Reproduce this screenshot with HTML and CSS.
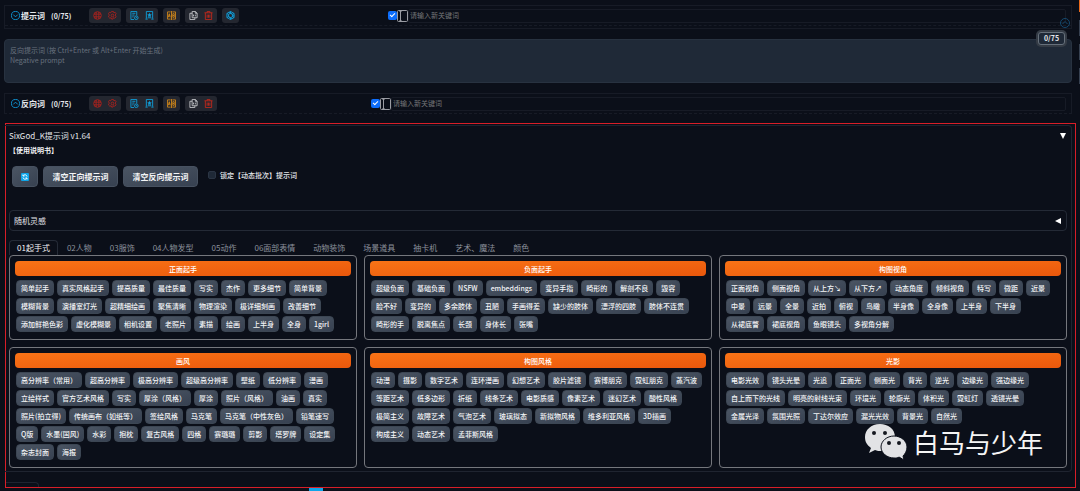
FILE: index.html
```html
<!DOCTYPE html>
<html lang="zh-CN">
<head>
    <meta charset="UTF-8">
    <meta name="viewport" content="width=device-width, initial-scale=1.0">
    <title>SixGod_K提示词</title>
    <link rel="stylesheet" href="styles.css">
</head>
<body>
    <!-- Icons -->
    <svg class="sprite" aria-hidden="true">
        <symbol id="i-down" viewBox="0 0 20 20"><circle cx="10" cy="10" r="9"/><path d="M5 8l5 5 5-5"/></symbol>
        <symbol id="i-up" viewBox="0 0 20 20"><circle cx="10" cy="10" r="9"/><path d="M5 12l5-5 5 5"/></symbol>
        <symbol id="i-globe" viewBox="0 0 20 20"><circle cx="10" cy="10" r="8.5"/><path d="M2 7h16M2 13h16M7 2v16M13 2v16"/></symbol>
        <symbol id="i-gear" viewBox="0 0 20 20"><path d="M8 1h4l1 3 3-1 2 3-2 3 2 4-3 3-3-1-1 3H8l-1-3-3 1-3-3 2-4-2-3 2-3 3 1z"/><circle cx="10" cy="10" r="3"/></symbol>
        <symbol id="i-history" viewBox="0 0 20 20"><path d="M9 19H2V1h13v9M5 5h7M5 9h5M5 13h3"/><circle cx="14" cy="15" r="4"/><path d="M14 13v2h2"/></symbol>
        <symbol id="i-fav" viewBox="0 0 20 20"><path d="M3 17V1h14v16M1 18h5M14 18h5M6 15h8"/><path class="solid" d="M10 4l1.500 3 3.500.5-2.500 2.500.5 3.500-3-1.500-3 1.500.5-3.500L5 7.500 8.500 7z"/></symbol>
        <symbol id="i-trans" viewBox="0 0 20 20"><path d="M8 2H1v16h7M12 2h7v16h-7M10 0v20M3 14l2-8 2 8M4 11h3M13 6v8h3l1-2-1-2h-3M13 6h3l1 2-1 2"/></symbol>
        <symbol id="i-copy" viewBox="0 0 20 20"><path d="M7 1h7l4 4v10H7zM14 1v4h4M7 5H2v14h11v-4M10 8v4M14 8v4"/></symbol>
        <symbol id="i-trash" viewBox="0 0 20 20"><path d="M1 4h18M7 4V1h6v3M3 4v15h14V4M7 8v7M10 8v7M13 8v7"/></symbol>
        <symbol id="i-ai" viewBox="0 0 20 20"><path d="M10 1l8 4.500v9L10 19l-8-4.500v-9z"/><path d="M10 5l4.500 2.500v5L10 15l-4.500-2.500v-5zM10 1v4M18 5.500l-3.500 2M18 14.500l-3.500-2M10 19v-4M2 14.500l3.500-2M2 5.500l3.500 2M6 3l8 4M14 17l-8-4M18 10l-4 2"/></symbol>
        <symbol id="i-panel" viewBox="0 0 22 24"><rect x="1" y="1" width="20" height="22" rx="2"/><path d="M5 3h4M7 3v18M5 21h4"/></symbol>
    </svg>

    <div class="side-strip"><i class="hot"></i><i></i><i></i><i></i></div>

    <div class="prompt-bar">
        <button class="title" type="button"><svg><use href="#i-down"/></svg>提示词</button>
        <span class="count">(0/75)</span>
        <div class="tools">
            <div class="group red"><button type="button" aria-label="语言"><svg><use href="#i-globe"/></svg></button><button type="button" aria-label="设置"><svg><use href="#i-gear"/></svg></button></div>
            <div class="group blue"><button type="button" aria-label="历史"><svg><use href="#i-history"/></svg></button><button type="button" aria-label="收藏"><svg><use href="#i-fav"/></svg></button></div>
            <div class="group amber"><button type="button" aria-label="翻译"><svg><use href="#i-trans"/></svg></button></div>
            <div class="group"><button type="button" aria-label="复制"><svg><use href="#i-copy"/></svg></button><button class="red" type="button" aria-label="删除"><svg><use href="#i-trash"/></svg></button></div>
            <div class="group blue"><button type="button" aria-label="AI"><svg><use href="#i-ai"/></svg></button></div>
        </div>
        <input class="tick" type="checkbox" checked aria-label="启用">
        <svg class="panel-icon"><use href="#i-panel"/></svg>
        <input class="keyword" type="text" placeholder="请输入新关键词" aria-label="请输入新关键词">
        <button class="fold" type="button" aria-label="收起"><svg><use href="#i-up"/></svg></button>
    </div>

    <div class="negative">
        <textarea aria-label="反向提示词" placeholder="反向提示词 (按 Ctrl+Enter 或 Alt+Enter 开始生成)&#10;Negative prompt"></textarea>
        <span class="badge">0/75</span>
    </div>

    <div class="prompt-bar short">
        <button class="title" type="button"><svg><use href="#i-up"/></svg>反向词</button>
        <span class="count">(0/75)</span>
        <div class="tools">
            <div class="group red"><button type="button" aria-label="语言"><svg><use href="#i-globe"/></svg></button><button type="button" aria-label="设置"><svg><use href="#i-gear"/></svg></button></div>
            <div class="group blue"><button type="button" aria-label="历史"><svg><use href="#i-history"/></svg></button><button type="button" aria-label="收藏"><svg><use href="#i-fav"/></svg></button></div>
            <div class="group amber"><button type="button" aria-label="翻译"><svg><use href="#i-trans"/></svg></button></div>
            <div class="group"><button type="button" aria-label="复制"><svg><use href="#i-copy"/></svg></button><button class="red" type="button" aria-label="删除"><svg><use href="#i-trash"/></svg></button></div>
        </div>
        <input class="tick" type="checkbox" checked aria-label="启用">
        <svg class="panel-icon"><use href="#i-panel"/></svg>
        <input class="keyword" type="text" placeholder="请输入新关键词" aria-label="请输入新关键词">
    </div>

    <div class="frame">
        <section class="block">
            <div class="block-head">
                <span>SixGod_K提示词 v1.64</span>
                <svg class="arrow" viewBox="0 0 6 6"><path d="M0 0h6L3 6z"/></svg>
            </div>
            <a class="manual" href="#">【使用说明书】</a>

            <div class="actions">
                <button class="refresh" type="button" aria-label="刷新">
                    <svg viewBox="0 0 16 16"><rect width="16" height="16" rx="2"/><path d="M12 7a4 4 0 0 0-7-2M4 3v3h3M4 9a4 4 0 0 0 7 2M12 13v-3H9"/></svg>
                </button>
                <button type="button">清空正向提示词</button>
                <button type="button">清空反向提示词</button>
                <label><input type="checkbox">锁定【动态批次】提示词</label>
            </div>

            <button class="accordion" type="button">
                <span>随机灵感</span>
                <svg class="arrow" viewBox="0 0 6 6"><path d="M6 0v6L0 3z"/></svg>
            </button>

            <nav class="tabs">
                <button class="active" type="button">01起手式</button>
                <button type="button">02人物</button>
                <button type="button">03服饰</button>
                <button type="button">04人物发型</button>
                <button type="button">05动作</button>
                <button type="button">06面部表情</button>
                <button type="button">动物装饰</button>
                <button type="button">场景道具</button>
                <button type="button">抽卡机</button>
                <button type="button">艺术、魔法</button>
                <button type="button">颜色</button>
            </nav>

            <div class="cards">
                <div class="card">
                    <button class="card-title" type="button">正面起手</button>
                    <div class="tags">
                        <button>简单起手</button><button>真实风格起手</button><button>提高质量</button><button>最佳质量</button><button>写实</button><button>杰作</button><button>更多细节</button><button>简单背景</button>
                        <button>模糊背景</button><button>演播室灯光</button><button>超精细绘画</button><button>聚焦清晰</button><button>物理渲染</button><button>极详细刻画</button><button>改善细节</button>
                        <button>添加鲜艳色彩</button><button>虚化模糊景</button><button>相机设置</button><button>老照片</button><button>素描</button><button>绘画</button><button>上半身</button><button>全身</button><button>1girl</button>
                    </div>
                </div>
                <div class="card">
                    <button class="card-title" type="button">负面起手</button>
                    <div class="tags">
                        <button>超级负面</button><button>基础负面</button><button>NSFW</button><button>embeddings</button><button>变异手指</button><button>畸形的</button><button>解剖不良</button><button>毁容</button>
                        <button>脸不好</button><button>变异的</button><button>多余肢体</button><button>丑陋</button><button>手画得差</button><button>缺少的肢体</button><button>漂浮的四肢</button><button>肢体不连贯</button>
                        <button>畸形的手</button><button>脱离焦点</button><button>长颈</button><button>身体长</button><button>张嘴</button>
                    </div>
                </div>
                <div class="card">
                    <button class="card-title" type="button">构图视角</button>
                    <div class="tags">
                        <button>正面视角</button><button>侧面视角</button><button>从上方↘</button><button>从下方↗</button><button>动态角度</button><button>倾斜视角</button><button>特写</button><button>微距</button><button>近景</button>
                        <button>中景</button><button>远景</button><button>全景</button><button>近拍</button><button>俯视</button><button>鸟瞰</button><button>半身像</button><button>全身像</button><button>上半身</button><button>下半身</button>
                        <button>从裙底瞥</button><button>裙底视角</button><button>鱼眼镜头</button><button>多视角分解</button>
                    </div>
                </div>
                <div class="card">
                    <button class="card-title" type="button">画风</button>
                    <div class="tags">
                        <button>高分辨率（常用）</button><button>超高分辨率</button><button>极高分辨率</button><button>超级高分辨率</button><button>壁纸</button><button>低分辨率</button><button>漫画</button>
                        <button>立绘样式</button><button>官方艺术风格</button><button>写实</button><button>厚涂（风格）</button><button>厚涂</button><button>照片（风格）</button><button>油画</button><button>真实</button>
                        <button>照片(拍立得)</button><button>传统画布（如纸等）</button><button>签绘风格</button><button>马克笔</button><button>马克笔（中性灰色）</button><button>铅笔速写</button>
                        <button>Q版</button><button>水墨(国风)</button><button>水彩</button><button>抱枕</button><button>复古风格</button><button>四格</button><button>赛璐璐</button><button>剪影</button><button>塔罗牌</button><button>设定集</button>
                        <button>杂志封面</button><button>海报</button>
                    </div>
                </div>
                <div class="card">
                    <button class="card-title" type="button">构图风格</button>
                    <div class="tags">
                        <button>动漫</button><button>摄影</button><button>数字艺术</button><button>连环漫画</button><button>幻想艺术</button><button>胶片滤镜</button><button>赛博朋克</button><button>霓虹朋克</button><button>蒸汽波</button>
                        <button>等距艺术</button><button>低多边形</button><button>折纸</button><button>线条艺术</button><button>电影质感</button><button>像素艺术</button><button>迷幻艺术</button><button>酸性风格</button>
                        <button>极简主义</button><button>故障艺术</button><button>气泡艺术</button><button>玻璃拟态</button><button>新拟物风格</button><button>维多利亚风格</button><button>3D插画</button>
                        <button>构成主义</button><button>动态艺术</button><button>孟菲斯风格</button>
                    </div>
                </div>
                <div class="card">
                    <button class="card-title" type="button">光影</button>
                    <div class="tags">
                        <button>电影光效</button><button>镜头光晕</button><button>光追</button><button>正面光</button><button>侧面光</button><button>背光</button><button>逆光</button><button>边缘光</button><button>强边缘光</button>
                        <button>自上而下的光线</button><button>明亮的射线光束</button><button>环境光</button><button>轮廓光</button><button>体积光</button><button>霓虹灯</button><button>透镜光晕</button>
                        <button>金属光泽</button><button>氛围光照</button><button>丁达尔效应</button><button>漏光光效</button><button>背景光</button><button>自然光</button>
                    </div>
                </div>
            </div>
        </section>
        <div class="next-tab"></div>

        <!-- Watermark -->
        <div class="watermark">
            <svg viewBox="0 0 42 36">
                <path d="M15 0C6 0 0 6 0 13c0 5 2 8 6 11l-2 5 6-3c2 1 4 1 7 1 8 0 13-6 13-14C30 5 23 0 15 0z"/>
                <path class="ring" d="M29 12c-7 0-13 5-13 11s6 11 13 11c2 0 4 0 5-1l5 3-1-4c2-2 4-5 4-9 0-6-6-11-13-11z"/>
                <g class="eyes"><circle cx="9" cy="9" r="2"/><circle cx="20" cy="9" r="2"/><circle cx="24" cy="19" r="2"/><circle cx="34" cy="19" r="2"/></g>
            </svg>
            <span>白马与少年</span>
        </div>
    </div>
    <div class="next-row"><i></i></div>
</body>
</html>
```
FILE: styles.css
```css
* {
    box-sizing: border-box;
}
body {
    position: relative;
    margin: 0;
    padding: 5px 4px 0;
    background: #0b0f19;
    color: #e5e7eb;
    font-family: "Noto Sans CJK SC", sans-serif;
    font-size: 8px;
    line-height: 12px;
}
button, input, textarea {
    margin: 0;
    padding: 0;
    border: 0;
    background: none;
    color: inherit;
    font: inherit;
}
button {
    cursor: pointer;
    white-space: nowrap;
}
svg {
    display: block;
    flex: none;
    fill: none;
    stroke: currentColor;
    stroke-width: 2;
}
.sprite {
    position: absolute;
    width: 0;
    height: 0;
}
.solid {
    fill: currentColor;
    stroke: none;
}

/* pieces of the neighbouring column */
.side-strip {
    position: absolute;
    top: 0;
    right: 0;
    width: 1px;
}
.side-strip i {
    display: block;
    height: 16px;
    margin-bottom: 8px;
    background: #374151;
}
.side-strip .hot {
    height: 12px;
    background: #ea6a1c;
}

/* prompt bars */
.prompt-bar {
    position: relative;
    display: flex;
    align-items: center;
    height: 24px;
    margin-right: 4px;
    padding: 0 5px 3px 6px;
    border: 1px solid #171b26;
}
.prompt-bar::after {
    content: "";
    position: absolute;
    left: 0;
    right: 0;
    bottom: 2px;
    border-bottom: 1px dashed #171b26;
}
.prompt-bar.short {
    height: 21px;
    padding-bottom: 0;
    border-bottom-style: dashed;
}
.prompt-bar.short::after {
    display: none;
}
.title {
    display: flex;
    align-items: center;
    gap: 1px;
    font-weight: 700;
}
.title svg {
    width: 9px;
    height: 9px;
    color: #109bdb;
}
.count {
    width: 38px;
    margin-left: 6px;
    font-size: 7px;
    font-weight: 600;
}
.tools {
    display: flex;
    gap: 5px;
    width: 299px;
}
.short .tools {
    width: 282px;
}
.group {
    display: flex;
    align-items: center;
    gap: 6px;
    height: 15px;
    padding: 0 4px;
    border-radius: 3px;
    background: #242730;
    color: #c4c6ca;
}
.group svg {
    width: 9px;
    height: 9px;
}
.red {
    color: #c0281c;
}
.blue {
    color: #10a0dc;
}
.amber {
    color: #d0871a;
}
.group.red {
    color: #a8221e;
}
.tick {
    appearance: none;
    flex: none;
    width: 9px;
    height: 9px;
    border-radius: 2px;
    background: #0d6efd;
}
.tick::before {
    content: "";
    display: block;
    width: 2px;
    height: 4px;
    margin: 1px 0 0 3px;
    border: solid #fff;
    border-width: 0 1px 1px 0;
    box-sizing: content-box;
    transform: rotate(45deg);
}
.panel-icon {
    width: 11px;
    height: 12px;
    color: #9a9ca3;
}
.keyword {
    flex: 1;
    min-width: 0;
    height: 14px;
    padding: 0 1px 1px;
    border: 1px solid #171b26;
    border-radius: 2px;
    font-size: 7px;
}
.keyword::placeholder {
    color: #747678;
    opacity: 1;
}
.fold {
    position: absolute;
    right: 1px;
    bottom: 0;
    z-index: 1;
    color: #15496e;
}
.fold svg {
    width: 10px;
    height: 10px;
}

/* negative prompt */
.negative {
    position: relative;
    margin: 10px 4px 10px 0;
}
.negative textarea {
    display: block;
    width: 100%;
    height: 44px;
    padding: 5px;
    border: 1px solid #283240;
    border-radius: 4px;
    background: #1f2937;
    font-size: 7px;
    line-height: 10px;
    resize: none;
}
.negative textarea::placeholder {
    color: #68717e;
    opacity: 1;
}
.badge {
    position: absolute;
    top: -7px;
    right: 7px;
    width: 27px;
    height: 13px;
    border: 1px solid #66707b;
    border-radius: 3px;
    background: #1f2937;
    box-shadow: 0 0 0 2px #343b45;
    font-size: 7px;
    font-weight: 600;
    line-height: 11px;
    text-align: center;
}

/* highlighted area */
.frame {
    position: relative;
    margin: 9px 0 0 1px;
    border: 1px solid #d81e28;
}
.block {
    margin: 1px 3px 0 -1px;
    padding: 4px 4px 3px;
    border: 1px solid #1f2430;
    border-left: 0;
    border-radius: 0 4px 4px 0;
}
.block-head,
.accordion {
    display: flex;
    align-items: center;
    justify-content: space-between;
}
.block-head {
    height: 12px;
    padding-right: 1px;
}
.arrow {
    width: 6px;
    height: 6px;
    fill: #fff;
    stroke: none;
}
.manual {
    display: block;
    width: max-content;
    margin-top: 2px;
    color: #f3f4f6;
    font-size: 7px;
    font-weight: 700;
    text-decoration: none;
}
.actions {
    display: flex;
    align-items: center;
    gap: 5px;
    margin: 10px 3px 23px;
}
.actions button {
    width: 75px;
    height: 21px;
    border: 1px solid #475160;
    border-radius: 4px;
    background: linear-gradient(to bottom right, #4b5563, #374151);
    color: #f3f4f6;
    font-weight: 600;
}
.actions .refresh {
    display: flex;
    align-items: center;
    justify-content: center;
    width: 26px;
}
.refresh svg {
    width: 8px;
    height: 8px;
    stroke: #fff;
}
.refresh rect {
    fill: #0ea5e9;
    stroke: none;
}
.actions label {
    display: flex;
    align-items: center;
    gap: 4px;
    margin: 0 0 3px 5px;
    font-size: 7px;
    font-weight: 500;
}
.actions label input {
    appearance: none;
    width: 8px;
    height: 8px;
    border: 1px solid #2b3544;
    border-radius: 2px;
    background: #1f2937;
}
.accordion {
    width: 100%;
    height: 21px;
    padding: 0 5px 0 4px;
    border: 1px solid #242a36;
    border-radius: 4px;
}

/* tabs */
.tabs {
    display: flex;
    margin-top: 9px;
}
.tabs button {
    height: 15px;
    padding: 0 8px;
    border: 1px solid transparent;
    border-bottom: 0;
    border-radius: 4px 4px 0 0;
    color: #8b919c;
    line-height: 14px;
}
.tabs .active {
    padding: 0 7px;
    border-color: #252b37;
    color: #f3f4f6;
}

/* cards */
.cards {
    display: grid;
    grid-template-columns: repeat(3, 1fr);
    gap: 7px;
}
.card {
    padding: 5px;
    border: 1px solid #75777d;
    border-radius: 4px;
}
.card-title {
    display: block;
    width: 100%;
    height: 15px;
    border-radius: 4px;
    background: linear-gradient(to bottom right, #f97316, #ea580c);
    color: #fff;
    font-size: 7px;
    font-weight: 500;
}
.tags {
    display: flex;
    flex-wrap: wrap;
    padding: 4px 1px 0;
}
.tags button {
    height: 16px;
    margin: 0 3px 2px 0;
    padding: 0 4px;
    border: 1px solid #3c4653;
    border-radius: 4px;
    background: linear-gradient(to bottom right, #4b5563, #374151);
    color: #f3f4f6;
    font-size: 7px;
    font-weight: 500;
}

/* next block */
.next-tab {
    width: 33px;
    height: 5px;
    margin-top: 10px;
    border: 1px solid #1f2430;
    border-width: 1px 1px 0 0;
    border-radius: 0 4px 0 0;
}
.next-row {
    display: flex;
    height: 3px;
    padding-left: 305px;
}
.next-row i {
    width: 14px;
    background: #0ea5e9;
}

.watermark {
    position: absolute;
    right: 32px;
    bottom: 27px;
    display: flex;
    align-items: center;
    gap: 6px;
    color: #f5f5f5;
    font-size: 26px;
    line-height: 36px;
}
.watermark svg {
    width: 42px;
    height: 36px;
    fill: #e2e3e5;
    stroke: none;
}
.watermark .ring {
    stroke: #0b0f19;
    stroke-width: 1;
}
.watermark .eyes {
    fill: #15181f;
}
```
